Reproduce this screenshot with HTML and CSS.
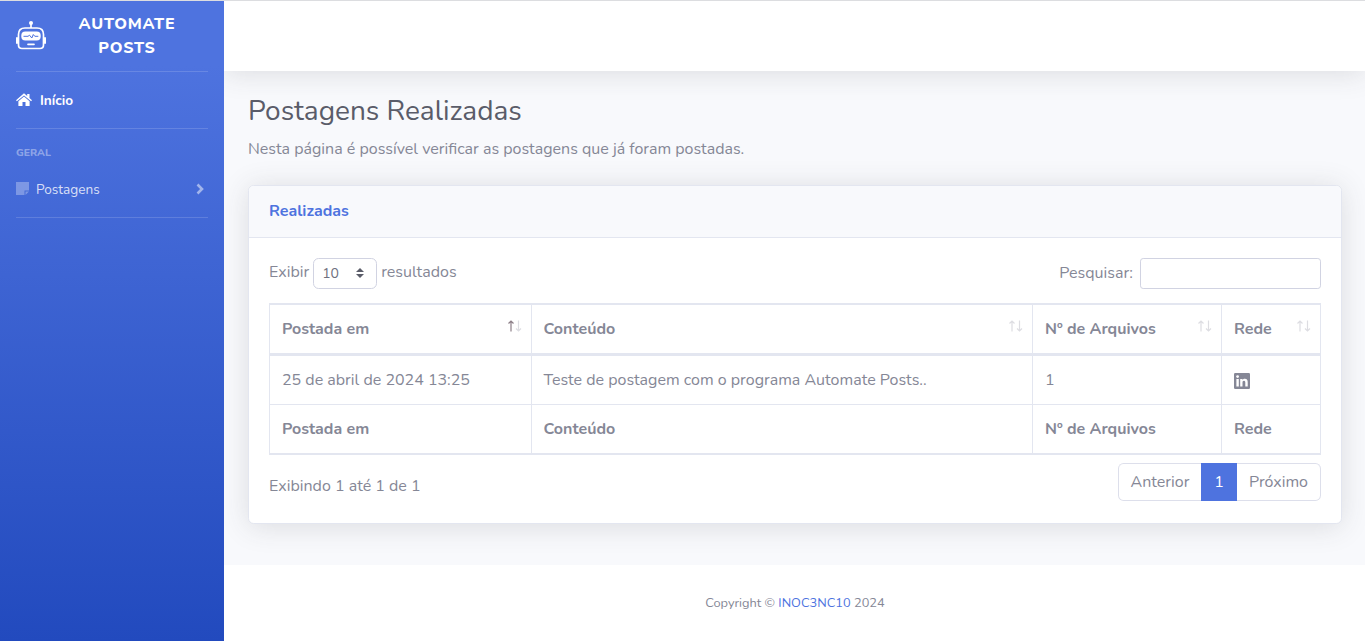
FILE: index.html
```html
<!DOCTYPE html>
<html lang="pt-BR">
<head>
<meta charset="utf-8">
<title>Automate Posts</title>
<link rel="stylesheet" href="styles.css">
</head>
<body>
<div class="wrapper">
  <nav class="sidebar">
    <a class="brand">
      <svg class="brand-icon" width="30" height="29" viewBox="0 0 30 29" fill="none" stroke="#fff" stroke-width="1.700">
        <path d="M15 3v4"/><circle cx="15" cy="2" r="2" fill="#fff" stroke="none"/>
        <path d="M9 7h12q6.500 0 6.500 6.500V24q0 3.500-3.500 3.500H6Q2.500 27.500 2.500 24V13.500Q2.500 7 9 7Z"/>
        <path d="M1 17v5M29 17v5" stroke-width="2" stroke-linecap="round"/>
        <rect x="5.300" y="10.500" width="19.400" height="9" rx="4" fill="#fff" stroke="none"/>
        <path d="M7.500 15.300h4.500l1.500-1.100 2.300 2.800L17.300 13.500l1.500 1.800h3.500" stroke="#4e73df" stroke-width="1"/>
        <path d="M12 23.300h6" stroke-width="1.700" stroke-linecap="round"/>
      </svg>
      <span class="brand-text">AUTOMATE<br>POSTS</span>
    </a>
    <hr>
    <a class="nav-item active">
      <svg width="16" height="14" viewBox="0 0 16 14" fill="#fff"><path d="M0 7.200 8 .3l3.200 2.700V1h2.300v4L16 7.200l-.9 1.100L8 2.400.9 8.300Z"/><path d="M2.400 8.300 8 3.600l5.600 4.700V13H9.500V9h-3v4H2.400Z"/></svg>
      <span>Início</span>
    </a>
    <hr>
    <div class="heading">GERAL</div>
    <a class="nav-item posts">
      <svg class="note" width="13" height="13" viewBox="0 0 13 13"><path d="M0 0h13v8.500H8.500V13H0Z"/><path d="M9.500 9.500H13L9.500 13Z"/></svg>
      <span>Postagens</span>
      <svg class="chev" width="8" height="12" viewBox="0 0 8 12" fill="none"><path d="m1.500 1.500 4.500 4.500-4.500 4.500" stroke-width="2.600"/></svg>
    </a>
    <hr>
  </nav>
  <div class="content">
    <header class="topbar"></header>
    <main>
      <h1>Postagens Realizadas</h1>
      <p class="lead">Nesta página é possível verificar as postagens que já foram postadas.</p>
      <section class="card">
        <div class="card-header">Realizadas</div>
        <div class="card-body">
          <div class="controls">
            <label class="length"><span>Exibir</span>
              <span class="select"><span>10</span><svg width="8" height="10" viewBox="0 0 8 10" fill="#5a5c69"><path d="M4 0 8 4H0ZM4 10 0 6h8Z"/></svg></span>
              <span>resultados</span></label>
            <label class="search"><span>Pesquisar:</span><input type="text"></label>
          </div>
          <table>
            <colgroup><col class="c1"><col class="c2"><col class="c3"><col class="c4"></colgroup>
            <thead><tr>
              <th><div class="th sorted"><span>Postada em</span><svg class="sort" width="15" height="12" viewBox="0 0 15 12"><path class="up" d="M4 11.500V1M1.500 3.500 4 1l2.500 2.500"/><path class="down" d="M11.500 .5V11M9 8.500l2.500 2.500L14 8.500"/></svg></div></th>
              <th><div class="th"><span>Conteúdo</span><svg class="sort" width="15" height="12" viewBox="0 0 15 12"><path class="up" d="M4 11.500V1M1.500 3.500 4 1l2.500 2.500"/><path class="down" d="M11.500 .5V11M9 8.500l2.500 2.500L14 8.500"/></svg></div></th>
              <th><div class="th"><span>Nº de Arquivos</span><svg class="sort" width="15" height="12" viewBox="0 0 15 12"><path class="up" d="M4 11.500V1M1.500 3.500 4 1l2.500 2.500"/><path class="down" d="M11.500 .5V11M9 8.500l2.500 2.500L14 8.500"/></svg></div></th>
              <th><div class="th"><span>Rede</span><svg class="sort" width="15" height="12" viewBox="0 0 15 12"><path class="up" d="M4 11.500V1M1.500 3.500 4 1l2.500 2.500"/><path class="down" d="M11.500 .5V11M9 8.500l2.500 2.500L14 8.500"/></svg></div></th>
            </tr></thead>
            <tbody><tr>
              <td>25 de abril de 2024 13:25</td>
              <td>Teste de postagem com o programa Automate Posts..</td>
              <td>1</td>
              <td><svg class="linkedin" width="16" height="16" viewBox="0 0 16 16"><rect width="16" height="16" rx="1.200" fill="#858796"/><g fill="#fff"><circle cx="3.600" cy="3.600" r="1.400"/><path d="M2.400 6h2.400v7.600H2.400ZM6.200 6h2.300v1.100C9 6.300 9.800 5.800 10.900 5.800c2.200 0 2.800 1.500 2.800 3.500v4.300h-2.400V9.800c0-1-.1-2-1.300-2s-1.500.9-1.500 2v3.800H6.200Z"/></g></svg></td>
            </tr></tbody>
            <tfoot><tr>
              <th>Postada em</th>
              <th>Conteúdo</th>
              <th>Nº de Arquivos</th>
              <th>Rede</th>
            </tr></tfoot>
          </table>
          <div class="bottom">
            <span class="info">Exibindo 1 até 1 de 1</span>
            <div class="pages"><a class="prev">Anterior</a><a class="current">1</a><a class="next">Próximo</a></div>
          </div>
        </div>
      </section>
    </main>
    <footer><span>Copyright © <a>INOC3NC10</a> 2024</span></footer>
  </div>
</div>
</body>
</html>
```
FILE: styles.css
```css
* { box-sizing: border-box; }
body {
  margin: 0;
  height: 641px;
  overflow: hidden;
  border-top: 1px solid #dcdde0;
  font: 400 16px/24px Nunito, Lato, "Open Sans", sans-serif;
  color: #858796;
  background: #f8f9fc;
}
svg { display: block; flex: none; }
.wrapper { display: flex; height: 640px; }
.sidebar {
  width: 224px;
  flex: none;
  background: linear-gradient(180deg, #4e73df 10%, #224abe 100%);
}
.sidebar hr { height: 1px; margin: 0 16px; border: 0; background: rgba(255, 255, 255, .15); }
.brand { display: flex; height: 70px; padding: 0 16px; align-items: center; color: #fff; }
.brand-icon { margin-top: -2px; }
.brand-text { flex: 1; text-align: center; font-weight: 800; letter-spacing: .8px; }
.nav-item { display: flex; align-items: center; height: 56px; padding: 2px 16px 0; font-size: 13.6px; color: rgba(255, 255, 255, .8); }
.active { color: #fff; font-weight: 700; gap: 8px; }
.active svg { margin-top: -3px; }
.heading { height: 32px; padding: 16px 16px 0; font-size: 10.4px; line-height: 15px; font-weight: 800; color: rgba(255, 255, 255, .4); }
.posts { gap: 7px; }
.posts svg { margin-top: -2px; }
.posts .note { margin-top: -3px; fill: rgba(255, 255, 255, .3); }
.chev { margin-left: auto; margin-right: 4px; stroke: rgba(255, 255, 255, .5); }
.content { flex: 1; display: flex; flex-direction: column; overflow: hidden; }
.topbar { height: 70px; flex: none; background: #fff; box-shadow: 0 2.400px 28px rgba(58, 59, 69, .15); }
main { flex: 1; padding: 23px 23px 0 24px; }
h1 { margin: 0 0 9px; font-size: 28px; line-height: 34px; font-weight: 400; color: #5a5c69; }
.lead { margin: 0 0 24px; }
.card { height: 339px; border: 1px solid #e3e6f0; border-radius: 5.6px; background: #fff; box-shadow: 0 2.400px 28px rgba(58, 59, 69, .15); }
.card-header { height: 52px; padding: 13px 20px; line-height: 24px; font-weight: 700; color: #4e73df; background: #f8f9fc; border-bottom: 1px solid #e3e6f0; border-radius: 5px 5px 0 0; }
.card-body { padding: 20px; }
.controls { display: flex; justify-content: space-between; height: 31px; margin-bottom: 14px; }
.length, .search { display: flex; }
.length { gap: 4px; }
.length > span { line-height: 28px; }
.length .select { display: flex; justify-content: space-between; align-items: center; width: 64px; height: 31px; padding: 0 12px 0 8px; font-size: 14px; border: 1px solid #d1d3e2; border-radius: 5.6px; color: #6e707e; }
.select svg { margin-top: -1px; }
.search { gap: 7px; line-height: 30px; }
.search input { width: 181px; height: 31px; border: 1px solid #d1d3e2; border-radius: 3.2px; background: #fff; }
table { width: 1052px; table-layout: fixed; border-collapse: separate; border-spacing: 0; border: solid #e3e6f0; border-width: 2px 1px; }
.c1 { width: 261px; } .c2 { width: 501px; } .c3 { width: 189px; } .c4 { width: 99px; }
th, td { height: 48px; padding: 0 12px; text-align: left; vertical-align: middle; white-space: nowrap; line-height: 24px; }
th + th, td + td { border-left: 1px solid #e3e6f0; }
th:nth-child(2), td:nth-child(2) { padding-left: 11.500px; }
thead th { height: 51px; border-bottom: 3px solid #e3e6f0; }
tfoot th { height: 49px; border-top: 1px solid #e3e6f0; }
.th { display: flex; justify-content: space-between; }
.sort { margin: 2.500px -3px 0 0; fill: none; stroke: #dddde2; stroke-width: 1.200; }
.sorted .up { stroke: #8d7f88; }
.linkedin { margin-top: 1px; }
.bottom { display: flex; justify-content: space-between; padding-top: 8px; }
.info { padding-top: 11px; }
.pages { display: flex; height: 38px; }
.pages a { display: flex; justify-content: center; align-items: center; border: 1px solid #dddfeb; }
.pages .prev { width: 83px; border-right: 0; border-radius: 5.6px 0 0 5.6px; }
.pages .current { width: 36px; color: #fff; background: #4e73df; border-color: #4e73df; }
.pages .next { width: 84px; border-left: 0; border-radius: 0 5.6px 5.6px 0; }
footer { height: 76px; flex: none; padding-left: 1px; background: #fff; text-align: center; font-size: 12.8px; line-height: 76px; }
footer a { color: #4e73df; }
```
